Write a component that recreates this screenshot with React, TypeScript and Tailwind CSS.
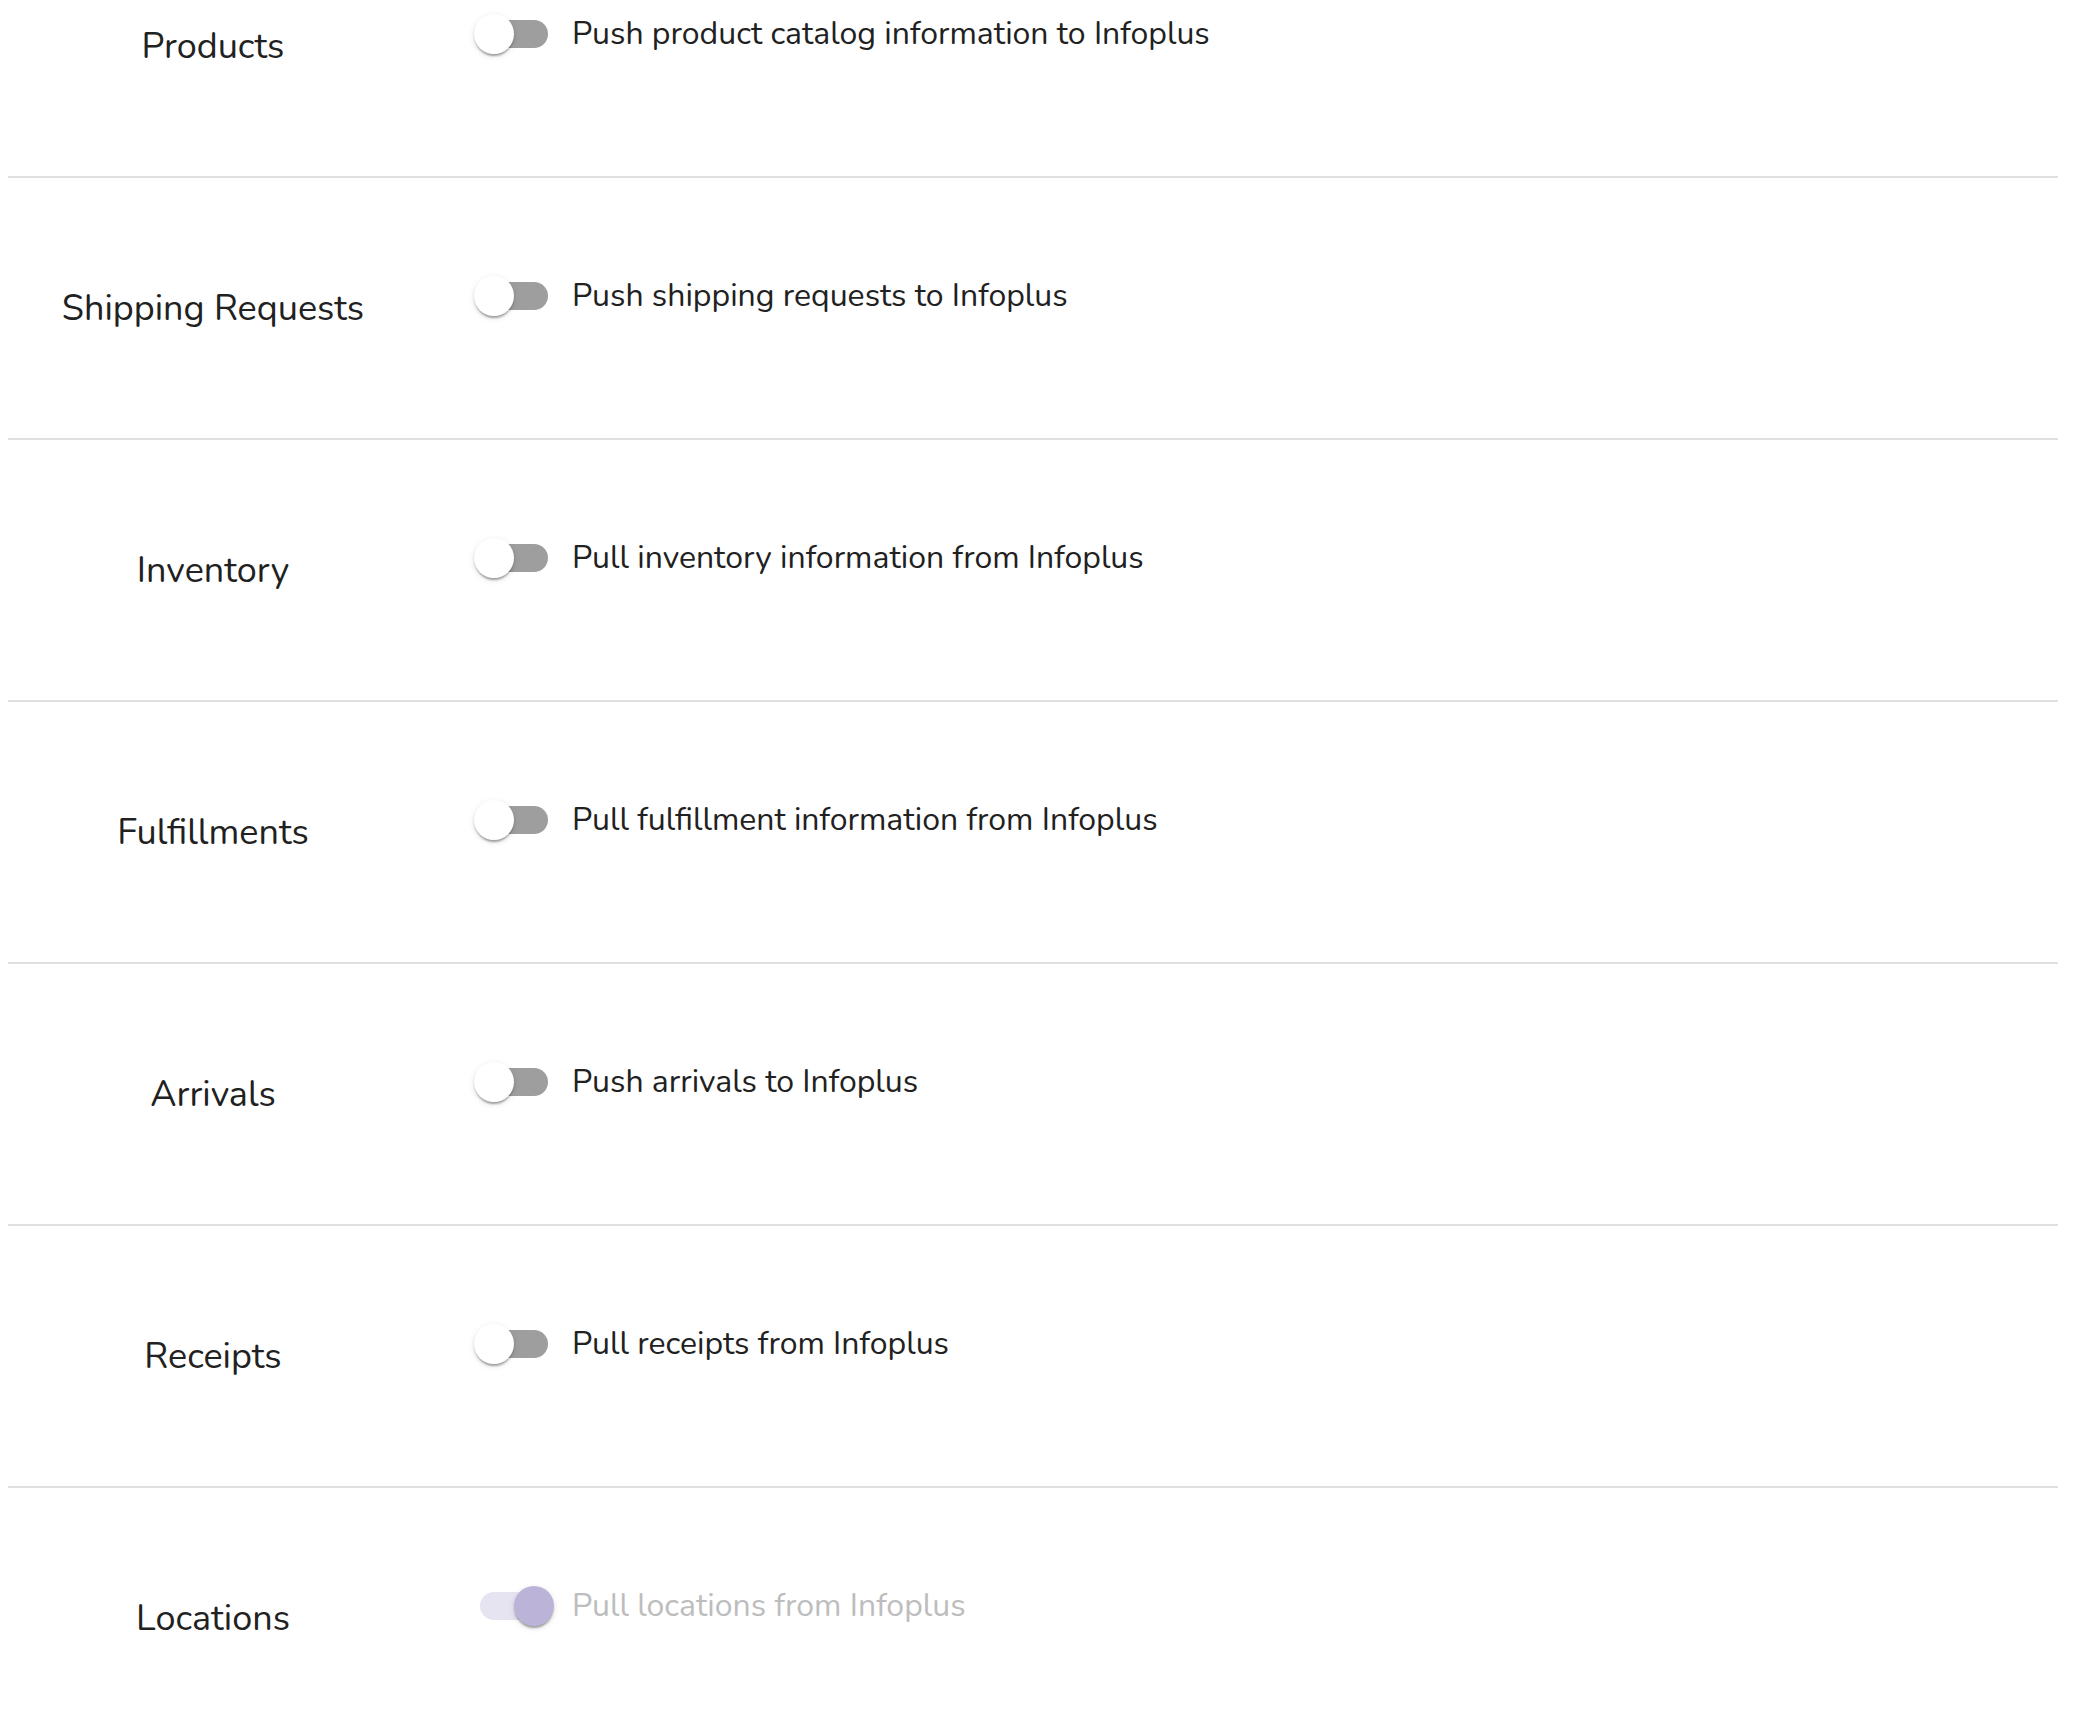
import React from "react";

type Row = { label: string; desc: string; checked?: boolean; disabled?: boolean };

const rows: Row[] = [
  { label: "Products", desc: "Push product catalog information to Infoplus" },
  { label: "Shipping Requests", desc: "Push shipping requests to Infoplus" },
  { label: "Inventory", desc: "Pull inventory information from Infoplus" },
  { label: "Fulfillments", desc: "Pull fulfillment information from Infoplus" },
  { label: "Arrivals", desc: "Push arrivals to Infoplus" },
  { label: "Receipts", desc: "Pull receipts from Infoplus" },
  { label: "Locations", desc: "Pull locations from Infoplus", checked: true, disabled: true },
];

function Switch({ checked, disabled }: { checked?: boolean; disabled?: boolean }) {
  return (
    <span className="relative inline-flex h-[76px] w-[116px] shrink-0 p-[24px]">
      <span
        className={
          checked
            ? "block h-full w-full rounded-[14px] bg-[#e7e4f2]"
            : "block h-full w-full rounded-[14px] bg-[#9e9e9e]"
        }
      />
      <span
        className={
          checked
            ? "absolute left-[58px] top-[18px] h-[40px] w-[40px] rounded-full bg-[#bcb3d9] shadow-[0px_4px_2px_-2px_rgba(0,0,0,0.2),0px_2px_2px_0px_rgba(0,0,0,0.14),0px_2px_6px_0px_rgba(0,0,0,0.12)]"
            : "absolute left-[18px] top-[18px] h-[40px] w-[40px] rounded-full bg-white shadow-[0px_4px_2px_-2px_rgba(0,0,0,0.2),0px_2px_2px_0px_rgba(0,0,0,0.14),0px_2px_6px_0px_rgba(0,0,0,0.12)]"
        }
      />
    </span>
  );
}

export default function App() {
  return (
    <div
      className="h-[1722px] w-full overflow-hidden bg-white"
      style={{ fontFamily: "Nunito, Lato, 'Noto Sans', sans-serif" }}
    >
      <div className="-mt-[84px] pl-[8px] pr-[34px]">
        {rows.map((r) => (
          <div key={r.label} className="flex h-[262px] items-start border-b-2 border-[#e0e0e0]">
            <div className="flex w-[410px] shrink-0 justify-center pt-[107px]">
              <span className="text-[36px] leading-[48px] text-[#212121]">{r.label}</span>
            </div>
            <div className="flex items-center pl-[38px] pt-[80px]">
              <Switch checked={r.checked} disabled={r.disabled} />
              <span
                className={
                  r.disabled
                    ? "text-[32px] leading-[48px] text-[#bdbdbd]"
                    : "text-[32px] leading-[48px] text-[#212121]"
                }
              >
                {r.desc}
              </span>
            </div>
          </div>
        ))}
      </div>
    </div>
  );
}
